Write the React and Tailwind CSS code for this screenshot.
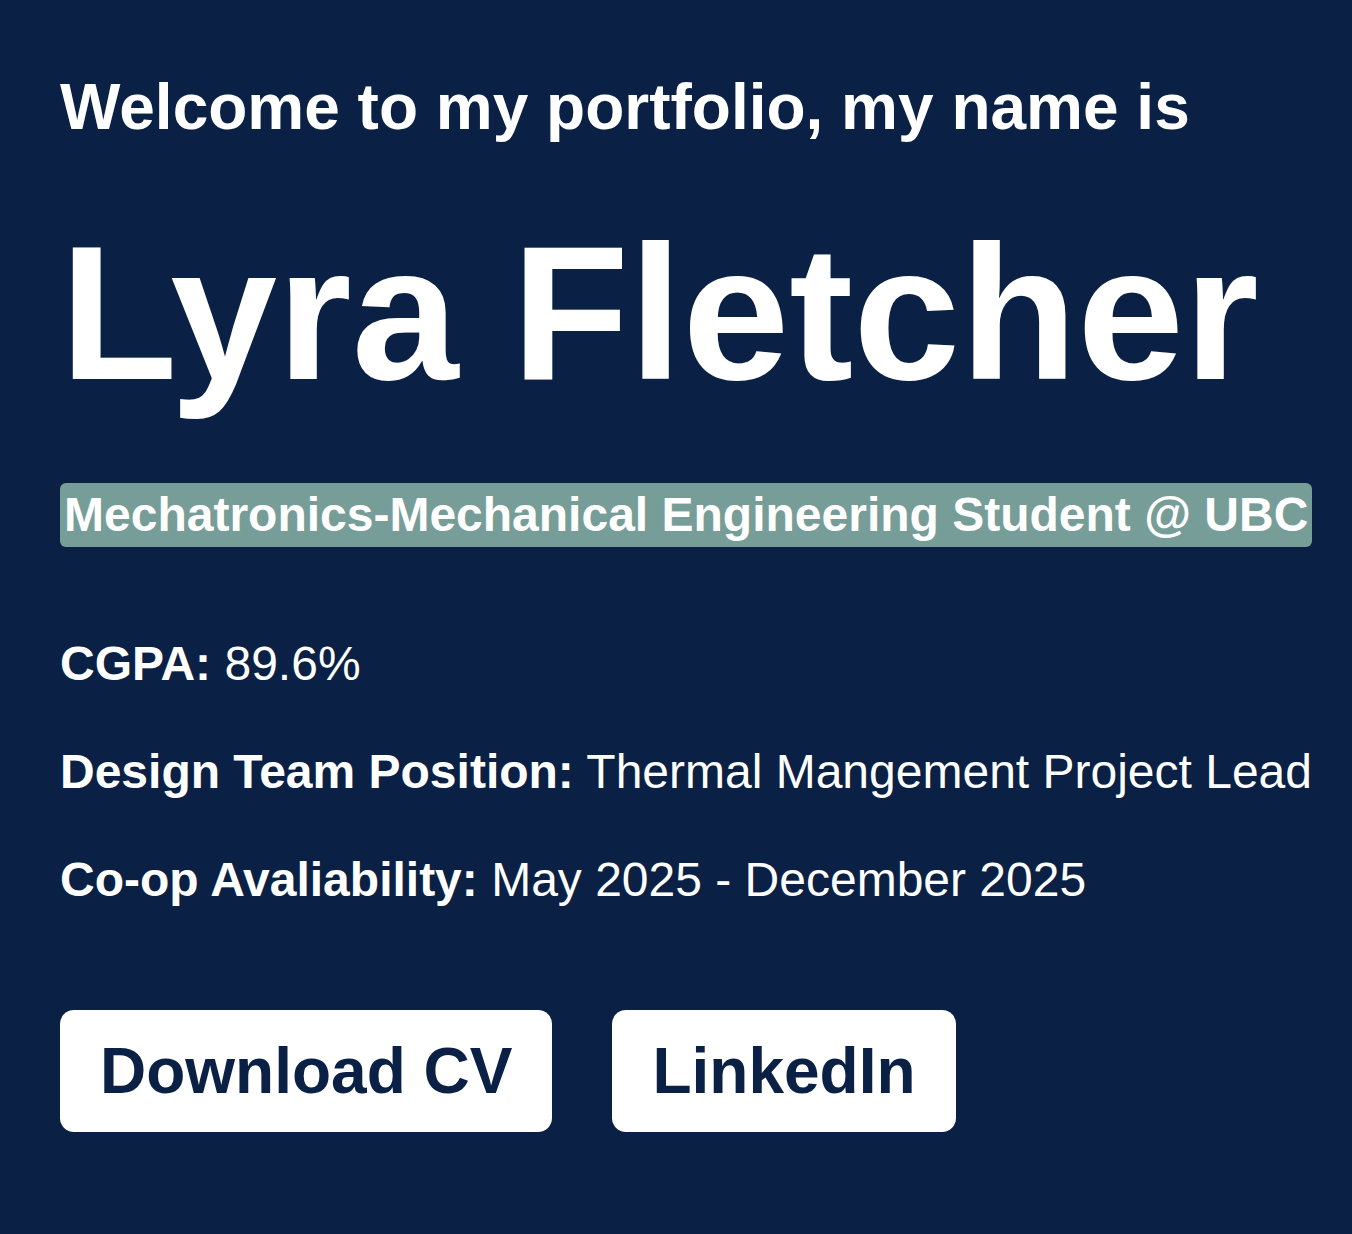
import React from "react";

const details = [
  { label: "CGPA:", value: "89.6%" },
  { label: "Design Team Position:", value: "Thermal Mangement Project Lead" },
  { label: "Co-op Avaliability:", value: "May 2025 - December 2025" },
];

const App = () => {
  return (
    <main
      className="min-h-screen bg-[#0a2044] text-white px-[60px] pt-[75px] pb-16"
      style={{ fontFamily: '"Liberation Sans", Arial, Helvetica, sans-serif' }}
    >
      <div className="flex flex-col items-start">
        <h2 className="text-[64px] leading-none font-bold">
          Welcome to my portfolio, my name is
        </h2>

        <h1 className="mt-[78px] text-[192px] leading-none font-bold">
          Lyra Fletcher
        </h1>

        <p className="mt-[74px] inline-block bg-[#779d99] rounded-[6px] px-[4px] text-[48px] leading-[64px] font-bold whitespace-nowrap">
          Mechatronics-Mechanical Engineering Student @ UBC
        </p>

        <div className="mt-[93px] flex flex-col gap-[60px]">
          {details.map((d) => (
            <p key={d.label} className="text-[48px] leading-[48px] whitespace-nowrap">
              <span className="font-bold">{d.label}</span> {d.value}
            </p>
          ))}
        </div>

        <div className="mt-[106px] flex gap-[60px]">
          <button className="bg-white text-[#0a2044] rounded-[14px] px-[40px] py-[29px] text-[64px] leading-none font-bold">
            Download CV
          </button>
          <button className="bg-white text-[#0a2044] rounded-[14px] px-[40px] py-[29px] text-[64px] leading-none font-bold">
            LinkedIn
          </button>
        </div>
      </div>
    </main>
  );
};

export default App;
